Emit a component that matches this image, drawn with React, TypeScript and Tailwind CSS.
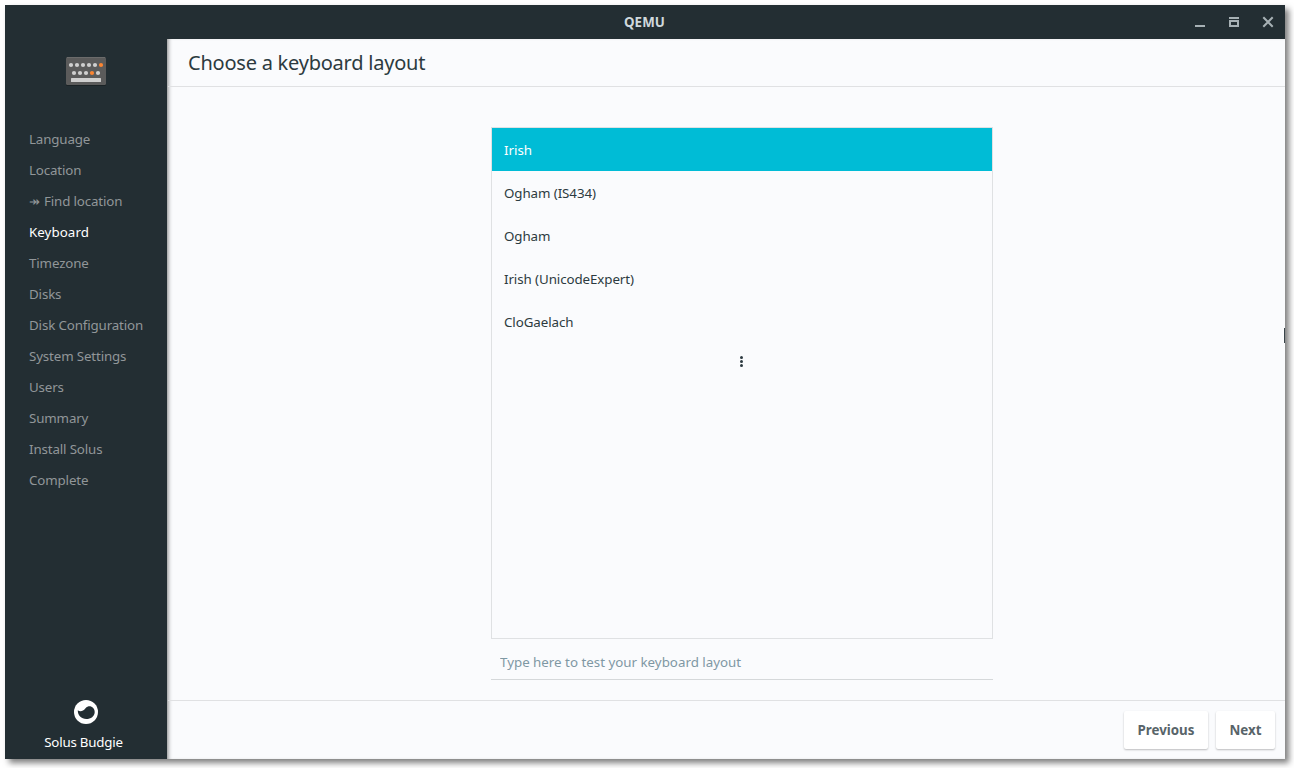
import { useState } from "react";

const steps = [
  "Language",
  "Location",
  "Find location",
  "Keyboard",
  "Timezone",
  "Disks",
  "Disk Configuration",
  "System Settings",
  "Users",
  "Summary",
  "Install Solus",
  "Complete",
];

const layouts = [
  "Irish",
  "Ogham (IS434)",
  "Ogham",
  "Irish (UnicodeExpert)",
  "CloGaelach",
];

function KeyboardIcon() {
  return (
    <svg width="40" height="29" viewBox="0 0 40 29">
      <rect y="1" width="40" height="28" rx="1.5" fill="#1a2225" />
      <rect width="40" height="28" rx="1.5" fill="#5b5b5b" />
      <rect x="1" width="38" height="1" fill="#6b6b6b" />
      {[5, 11, 17, 23, 29, 35].map((x) => (
        <circle key={x} cx={x} cy="8" r="2.1" fill={x === 35 ? "#fb8532" : "#cfcfcf"} />
      ))}
      {[8, 14, 20, 26, 32].map((x) => (
        <circle key={x} cx={x} cy="16" r="2.1" fill={x === 26 ? "#fb8532" : "#cfcfcf"} />
      ))}
      <rect x="5" y="21" width="30" height="4" rx="0.5" fill="#cfcfcf" />
    </svg>
  );
}

function BudgieIcon() {
  return (
    <svg width="24" height="24" viewBox="0 0 24 24">
      <circle cx="12" cy="12" r="12" fill="#ffffff" />
      <path
        d="M3.8 10.3C5 11.3 7.2 11.6 9 10.6C10.8 9.6 11.6 7.2 14 6.5C17.6 5.6 20.7 8.4 20.7 11.9C20.7 16.1 16.8 19 12.3 19C7.4 19 3.6 15.4 3.8 10.3Z"
        fill="#232e33"
      />
    </svg>
  );
}

function TitleBar() {
  return (
    <header className="grid h-[34px] shrink-0 grid-cols-[1fr_auto_1fr] items-center bg-[#232e33] text-[#cfd8dc]">
      <span />
      <h1 className="pt-0.5 pr-px text-[13.33px] font-bold tracking-[0.1px]">QEMU</h1>
      <div className="flex justify-end gap-[22px] pr-[11px]">
        <svg width="12" height="12" viewBox="0 0 12 12" fill="#a7b1b5">
          <path d="M1 9h10v2H1z" />
        </svg>
        <svg width="12" height="12" viewBox="0 0 12 12" fill="#a7b1b5">
          <path d="M1 1h10v2H1zM1 4h10v7H1zM3 6v3h6V6z" fillRule="evenodd" />
        </svg>
        <svg width="12" height="12" viewBox="0 0 12 12" stroke="#a7b1b5" strokeWidth="2">
          <path d="M1.3 1.3l9.4 9.4M10.7 1.3l-9.4 9.4" />
        </svg>
      </div>
    </header>
  );
}

function Sidebar() {
  return (
    <aside className="flex w-[162px] shrink-0 flex-col bg-[#232e33]">
      <div className="flex justify-center pt-[18px]">
        <KeyboardIcon />
      </div>

      <ul className="mt-[38px] pl-6 text-[13.33px] text-[#919699]">
        {steps.map((step) => (
          <li
            key={step}
            className={
              step === "Keyboard"
                ? "h-[31px] leading-[31px] tracking-[0.06px] whitespace-nowrap text-white"
                : "h-[31px] leading-[31px] tracking-[-0.14px] whitespace-nowrap"
            }
          >
            {step === "Find location" && (
              <span className="inline-block w-[15px]">↠</span>
            )}
            {step}
          </li>
        ))}
      </ul>

      <div className="mt-auto flex flex-col items-center pb-[7px] text-white">
        <BudgieIcon />
        <p className="mt-2 mr-[5px] text-[13.33px] leading-5 tracking-[-0.22px]">
          Solus Budgie
        </p>
      </div>
    </aside>
  );
}

export default function App() {
  const [selected, setSelected] = useState("Irish");

  return (
    <div className="h-screen overflow-hidden bg-white pt-[5px] pl-[5px] font-['Noto_Sans',sans-serif]">
      <div className="relative flex h-[754px] w-[1280px] flex-col shadow-[4px_4px_6px_rgba(0,0,0,0.5)]">
        <TitleBar />

        <div className="flex min-h-0 flex-1">
          <Sidebar />

          <main className="flex flex-1 flex-col bg-[#fafbfd] text-[#2c3a40] shadow-[inset_4px_0_4px_-3px_rgba(0,0,0,0.5)]">
            <div className="ml-px h-12 border-b border-[#e0e1e3] pl-5">
              <h2 className="text-[20px] leading-[47px] tracking-[-0.23px]">
                Choose a keyboard layout
              </h2>
            </div>

            <div className="ml-[324px] w-[502px] flex-1 pt-10">
              <div className="h-[512px] border border-[#dfe1e3]">
                {layouts.map((layout) => (
                  <button
                    key={layout}
                    type="button"
                    onClick={() => setSelected(layout)}
                    className={
                      layout === selected
                        ? "block h-[43px] w-full bg-[#00bcd6] pt-0.5 pl-3 text-left text-[13.33px] text-white"
                        : "block h-[43px] w-full pt-0.5 pl-3 text-left text-[13.33px] tracking-[-0.08px]"
                    }
                  >
                    {layout}
                  </button>
                ))}
                <div className="flex justify-center pt-[13px] pr-[1px]">
                  <svg width="3" height="11" viewBox="0 0 3 11" fill="#2c3a40">
                    <circle cx="1.5" cy="1.5" r="1.5" />
                    <circle cx="1.5" cy="5.5" r="1.5" />
                    <circle cx="1.5" cy="9.5" r="1.5" />
                  </svg>
                </div>
              </div>

              <input
                type="text"
                placeholder="Type here to test your keyboard layout"
                className="block h-[41px] w-full border-b border-[#d5d8da] pt-[5px] pl-[9px] text-[13.33px] outline-none placeholder:text-[#7f98a4]"
              />
            </div>

            <div className="ml-px flex h-[59px] justify-end gap-2 border-t border-[#e0e1e3] pt-[10px] pr-[10px] text-[13.33px] font-bold text-[#586469]">
              <button
                type="button"
                className="h-[38px] w-[84px] rounded-xs bg-white pt-px shadow-[0_1px_2px_rgba(0,0,0,0.25)]"
              >
                Previous
              </button>
              <button
                type="button"
                className="h-[38px] w-[59px] rounded-xs bg-white pt-px shadow-[0_1px_2px_rgba(0,0,0,0.25)]"
              >
                Next
              </button>
            </div>
          </main>
        </div>

        {/* edge of the mouse pointer */}
        <div className="absolute top-[323px] right-0 h-[15px] w-px bg-[#39444a] shadow-[-1px_0_1px_#ffffff]" />
      </div>
    </div>
  );
}
